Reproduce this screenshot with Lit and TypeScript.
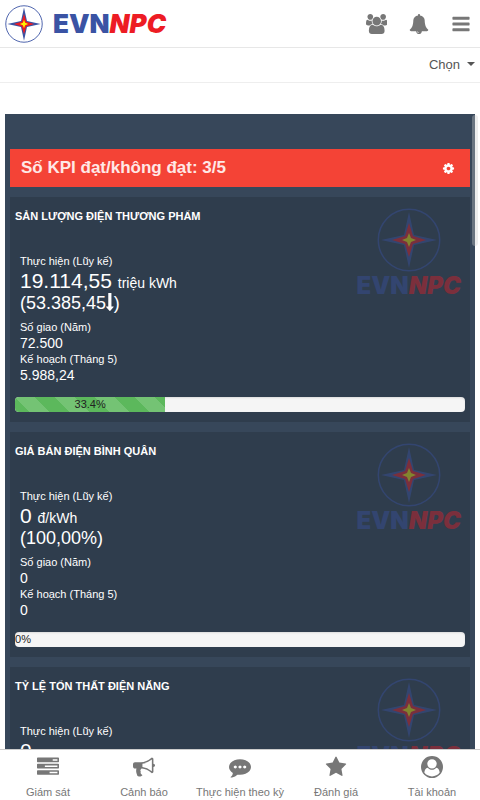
import { LitElement, html, css, svg, nothing } from "lit";
import { customElement, property } from "lit/decorators.js";

interface Kpi {
  title: string;
  value: string;
  unit: string;
  delta: string;
  down: boolean;
  year: string;
  plan: string;
  percent: number;
}

const KPIS: Kpi[] = [
  { title: "SẢN LƯỢNG ĐIỆN THƯƠNG PHẨM", value: "19.114,55", unit: "triệu kWh", delta: "53.385,45", down: true, year: "72.500", plan: "5.988,24", percent: 33.4 },
  { title: "GIÁ BÁN ĐIỆN BÌNH QUÂN", value: "0", unit: "đ/kWh", delta: "100,00%", down: false, year: "0", plan: "0", percent: 0 },
  { title: "TỶ LỆ TỔN THẤT ĐIỆN NĂNG", value: "0", unit: "", delta: "100,00%", down: false, year: "0", plan: "0", percent: 0 },
];

const ICONS: Record<string, { w: number; d: string }> = {
  users: { w: 1920, d: "M593 896q-162 5-265 128h-134q-82 0-138-40.5t-56-118.5q0-353 124-353 6 0 43.5 21t97.5 42.5 119 21.5q67 0 133-23-5 37-5 66 0 139 81 256zm1071 637q0 120-73 189.5t-194 69.5h-874q-121 0-194-69.5t-73-189.5q0-53 3.5-103.5t14-109 26.5-108.5 43-97.5 62-81 85.5-53.5 111.5-20q10 0 43 21.5t73 48 107 48 135 21.5 135-21.5 107-48 73-48 43-21.5q61 0 111.5 20t85.5 53.5 62 81 43 97.5 26.5 108.5 14 109 3.5 103.5zm-1024-1277q0 106-75 181t-181 75-181-75-75-181 75-181 181-75 181 75 75 181zm704 384q0 159-112.5 271.5t-271.5 112.5-271.5-112.5-112.5-271.5 112.5-271.5 271.5-112.5 271.5 112.5 112.5 271.5zm576 225q0 78-56 118.5t-138 40.5h-134q-103-123-265-128 81-117 81-256 0-29-5-66 66 23 133 23 59 0 119-21.5t97.5-42.5 43.5-21q124 0 124 353zm-128-609q0 106-75 181t-181 75-181-75-75-181 75-181 181-75 181 75 75 181z" },
  bell: { w: 1792, d: "M912 1696q0-16-16-16-59 0-101.5-42.5t-42.5-101.5q0-16-16-16t-16 16q0 73 51.5 124.5t124.5 51.5q16 0 16-16zm816-288q0 52-38 90t-90 38h-448q0 106-75 181t-181 75-181-75-75-181h-448q-52 0-90-38t-38-90q50-42 91-88t85-119.5 74.5-158.5 50-206 19.5-260q0-152 117-282.5t307-158.5q-8-19-8-39 0-40 28-68t68-28 68 28 28 68q0 20-8 39 190 28 307 158.5t117 282.5q0 139 19.5 260t50 206 74.5 158.5 85 119.5 91 88z" },
  bars: { w: 1792, d: "M1664 1344v128q0 26-19 45t-45 19h-1408q-26 0-45-19t-19-45v-128q0-26 19-45t45-19h1408q26 0 45 19t19 45zm0-512v128q0 26-19 45t-45 19h-1408q-26 0-45-19t-19-45v-128q0-26 19-45t45-19h1408q26 0 45 19t19 45zm0-512v128q0 26-19 45t-45 19h-1408q-26 0-45-19t-19-45v-128q0-26 19-45t45-19h1408q26 0 45 19t19 45z" },
  cog: { w: 1792, d: "M1152 896q0-106-75-181t-181-75-181 75-75 181 75 181 181 75 181-75 75-181zm512-109v222q0 12-8 23t-20 13l-185 28q-19 54-39 91 35 50 107 138 10 12 10 25t-9 23q-27 37-99 108t-94 71q-12 0-26-9l-138-108q-44 23-91 38-16 136-29 186-7 28-36 28h-222q-14 0-24.5-8.5t-11.5-21.5l-28-184q-49-16-90-37l-141 107q-10 9-25 9-14 0-25-11-126-114-165-168-7-10-7-23 0-12 8-23 15-21 51-66.5t54-70.5q-27-50-41-99l-183-27q-13-2-21-12.5t-8-23.5v-222q0-12 8-23t19-13l186-28q14-46 39-92-40-57-107-138-10-12-10-24 0-10 9-23 26-36 98.5-107.5t94.5-71.5q13 0 26 10l138 107q44-23 91-38 16-136 29-186 7-28 36-28h222q14 0 24.5 8.5t11.5 21.5l28 184q49 16 90 37l142-107q9-9 24-9 13 0 25 10 129 119 165 170 7 8 7 22 0 12-8 23-15 21-51 66.5t-54 70.5q26 50 41 98l183 28q13 2 21 12.5t8 23.5z" },
  tasks: { w: 1792, d: "M1024 1408h640v-128h-640v128zm-384-512h1024v-128h-1024v128zm640-512h384v-128h-384v128zm512 832v256q0 26-19 45t-45 19h-1664q-26 0-45-19t-19-45v-256q0-26 19-45t45-19h1664q26 0 45 19t19 45zm0-512v256q0 26-19 45t-45 19h-1664q-26 0-45-19t-19-45v-256q0-26 19-45t45-19h1664q26 0 45 19t19 45zm0-512v256q0 26-19 45t-45 19h-1664q-26 0-45-19t-19-45v-256q0-26 19-45t45-19h1664q26 0 45 19t19 45z" },
  bullhorn: { w: 1792, d: "M1664 640q53 0 90.5 37.5t37.5 90.5-37.5 90.5-90.5 37.5v384q0 52-38 90t-90 38q-417-347-812-380-58 19-91 66t-31 100.5 40 92.5q-20 33-23 65.5t6 58 33.5 55 48 50 61.5 50.5q-29 58-111.5 83t-168.5 11.5-132-55.5q-7-23-29.5-87.5t-32-94.5-23-89-15-101 3.5-98.5 22-110.5h-122q-66 0-113-47t-47-113v-192q0-66 47-113t113-47h480q435 0 896-384 52 0 90 38t38 90v384zm-128 604v-954q-394 302-768 343v270q377 42 768 341z" },
  comment: { w: 1792, d: "M640 896q0-53-37.5-90.5t-90.5-37.5-90.5 37.5-37.5 90.5 37.5 90.5 90.5 37.5 90.5-37.5 37.5-90.5zm384 0q0-53-37.5-90.5t-90.5-37.5-90.5 37.5-37.5 90.5 37.5 90.5 90.5 37.5 90.5-37.5 37.5-90.5zm384 0q0-53-37.5-90.5t-90.5-37.5-90.5 37.5-37.5 90.5 37.5 90.5 90.5 37.5 90.5-37.5 37.5-90.5zm384 0q0 174-120 321.5t-326 233-450 85.5q-110 0-211-18-173 173-435 229-52 10-86 13-12 1-22-6t-13-18q-4-15 20-37 5-5 23.5-21.5t25.5-23.5 23.5-25.5 24-31.5 20.5-37 20-48 14.5-57.5 12.5-72.5q-146-90-229.5-216.5t-83.5-269.5q0-174 120-321.5t326-233 450-85.5 450 85.5 326 233 120 321.5z" },
  star: { w: 1792, d: "M1728 647q0 22-26 48l-363 354 86 500q1 7 1 20 0 21-10.5 35.5t-30.5 14.5q-19 0-40-12l-449-236-449 236q-22 12-40 12-21 0-31.5-14.5t-10.5-35.5q0-6 2-20l86-500-364-354q-25-27-25-48 0-37 56-46l502-73 225-455q19-41 49-41t49 41l225 455 502 73q56 9 56 46z" },
  user: { w: 1792, d: "M1523 1339q-22-155-87.5-257.5t-184.5-118.5q-67 74-159.5 115.5t-195.5 41.5-195.5-41.5-159.5-115.5q-119 16-184.5 118.5t-87.5 257.5q106 150 271 237.5t356 87.5 356-87.5 271-237.5zm-243-699q0-159-112.5-271.5t-271.5-112.5-271.5 112.5-112.5 271.5 112.5 271.5 271.5 112.5 271.5-112.5 112.5-271.5zm512 256q0 182-71 347.5t-190.5 286-285.5 191.5-349 71q-182 0-348-71t-286-191-191-286-71-348 71-348 191-286 286-191 348-71 348 71 286 191 191 286 71 348z" },
  down: { w: 768, d: "M765 1363q8 19-5 35l-350 384q-10 10-23 10-14 0-24-10l-355-384q-13-16-5-35 9-19 29-19h194v-1312q0-14 9-23t23-9h252q14 0 23 9t9 23v1312h194q21 0 29 19z" },
};

const icon = (name: string) => html`<svg class="icon ${name}" viewBox="0 0 ${ICONS[name].w} 1792" aria-hidden="true">
  ${svg`<path d=${ICONS[name].d}></path>`}
</svg>`;

@customElement("evn-logo")
export class EvnLogo extends LitElement {
  static styles = css`
    :host {
      display: flex;
      align-items: center;
      gap: 10px;
      font: italic 900 26px/28px Inter, "Liberation Sans", sans-serif;
    }
    :host([stacked]) {
      flex-direction: column;
      gap: 0;
      font-size: 24px;
      opacity: 0.4;
    }
    .star { display: block; width: 38px; height: 38px; }
    :host([stacked]) .star { width: 64px; height: 64px; }
    .word { white-space: nowrap; color: #ed1c24; }
    .evn { font-style: normal; color: #3a53a4; }
  `;

  render() {
    return html`
      <svg class="star" viewBox="0 0 64 64" aria-hidden="true">
        <circle cx="32" cy="32" r="30.7" fill="none" stroke="#3a53a4" stroke-width="1.5"></circle>
        <path fill="#3a53a4" d="M32 4l5 23L60 32l-23 5L32 60l-5-23L4 32l23-5z"></path>
        <path fill="#ed1c24" d="M32 15l4 13L49 32l-13 4L32 49l-4-13L15 32l13-4z"></path>
        <path fill="#fff200" d="M32 25l2 5L39 32l-5 2L32 39l-2-5L25 32l5-2z"></path>
      </svg>
      <span class="word"><span class="evn">EVN</span>NPC</span>
    `;
  }
}

@customElement("kpi-card")
export class KpiCard extends LitElement {
  @property({ attribute: false }) kpi!: Kpi;

  static styles = css`
    :host {
      display: block;
      position: relative;
      padding: 10px 5px;
      background: #2f3d4d;
      color: #fff;
    }
    .title { margin: 0 0 28px; font-size: 11px; line-height: 18px; font-weight: bold; }
    .mark { position: absolute; top: 11px; right: 9px; }
    .stats { margin: 0 5px 14px; font-size: 11px; line-height: 16px; }
    .stats dd { margin: 0; font-size: 14px; }
    .stats .actual { margin-bottom: 6px; line-height: 20px; }
    .value { margin-right: 2px; font-size: 21px; line-height: 24px; }
    .delta { display: block; font-size: 18px; }
    .icon { height: 18px; vertical-align: -2px; fill: currentColor; }
    .track {
      height: 15px;
      overflow: hidden;
      border-radius: 4px;
      background: #f5f5f5;
      box-shadow: inset 0 1px 2px rgba(0, 0, 0, 0.1);
      color: #222;
      font-size: 11px;
      line-height: 15px;
      text-align: center;
    }
    .fill {
      width: fit-content;
      height: 15px;
      background: #5cb85c linear-gradient(45deg, rgba(255, 255, 255, 0.15) 25%, transparent 25%, transparent 50%, rgba(255, 255, 255, 0.15) 50%, rgba(255, 255, 255, 0.15) 75%, transparent 75%) 0 0 / 40px 40px;
    }
  `;

  render() {
    const k = this.kpi;
    return html`
      <h2 class="title">${k.title}</h2>
      <evn-logo class="mark" stacked></evn-logo>
      <dl class="stats">
        <dt>Thực hiện (Lũy kế)</dt>
        <dd class="actual">
          <span class="value">${k.value}</span> ${k.unit}
          <span class="delta">(${k.delta}${k.down ? icon("down") : nothing})</span>
        </dd>
        <dt>Số giao (Năm)</dt>
        <dd>${k.year}</dd>
        <dt>Kế hoạch (Tháng 5)</dt>
        <dd>${k.plan}</dd>
      </dl>
      <div class="track" role="progressbar" aria-label=${k.title} aria-valuenow=${k.percent} aria-valuemin="0" aria-valuemax="100">
        <div class="fill" style=${k.percent ? `width:${k.percent}%` : "background:none"}>${k.percent}%</div>
      </div>
    `;
  }
}

@customElement("app-root")
export class AppRoot extends LitElement {
  static styles = css`
    :host {
      display: flex;
      flex-direction: column;
      height: 100vh;
      background: #fff;
      color: #555;
      font-family: "Liberation Sans", Arial, sans-serif;
    }
    button, .tab { color: #777; }
    button { padding: 0; border: 0; background: none; font: inherit; cursor: pointer; }
    .icon { display: block; fill: currentColor; }
    .header {
      display: flex;
      align-items: center;
      justify-content: space-between;
      height: 47px;
      padding: 0 9px 0 5px;
      border-bottom: 1px solid #e7e7e7;
    }
    .actions { display: flex; align-items: center; gap: 22px; }
    .actions .icon { height: 20px; }
    .filter {
      display: flex;
      justify-content: flex-end;
      height: 32px;
      padding: 0 5px 2px;
      border-bottom: 1px solid #eee;
    }
    .choose { display: flex; align-items: center; gap: 7px; color: #555; font-size: 13px; }
    .caret { border: 4px solid transparent; border-top-color: currentColor; border-bottom: 0; }
    .content { position: relative; flex: 1; min-height: 0; margin-top: 31px; }
    .scroller { height: 100%; padding: 0 5px; box-sizing: border-box; overflow-y: auto; scrollbar-width: none; }
    .thumb {
      position: absolute;
      top: 1px;
      right: 2px;
      width: 6px;
      height: 131px;
      border-radius: 3px;
      background: rgba(204, 204, 204, 0.35);
    }
    .panel { display: flex; flex-direction: column; gap: 10px; padding: 35px 5px 10px; background: #37475a; }
    .summary {
      display: flex;
      align-items: center;
      justify-content: space-between;
      padding: 8px 15px 8px 11px;
      background: #f44336;
      color: #fff;
    }
    .summary h1 { margin: 0; color: #ffe8e6; font-size: 17px; line-height: 22px; }
    .summary button { color: #fff; }
    .summary .icon { height: 13px; }
    .tabs { display: flex; height: 50px; border-top: 1px solid #ccc; background: #fff; }
    .tab {
      display: flex;
      flex: 1 1 0;
      flex-direction: column;
      align-items: center;
      gap: 7px;
      padding-top: 6px;
      font-size: 11px;
      line-height: 14px;
      text-decoration: none;
      white-space: nowrap;
    }
    .tab .icon { height: 22px; }
  `;

  render() {
    const tabs = [
      ["tasks", "Giám sát"],
      ["bullhorn", "Cảnh báo"],
      ["comment", "Thực hiện theo kỳ"],
      ["star", "Đánh giá"],
      ["user", "Tài khoản"],
    ];
    return html`
      <header class="header">
        <evn-logo></evn-logo>
        <div class="actions">
          <button aria-label="Nhóm">${icon("users")}</button>
          <button aria-label="Thông báo">${icon("bell")}</button>
          <button aria-label="Menu">${icon("bars")}</button>
        </div>
      </header>
      <div class="filter">
        <button class="choose" aria-haspopup="listbox">Chọn <span class="caret"></span></button>
      </div>
      <main class="content">
        <div class="scroller">
          <div class="panel">
            <div class="summary">
              <h1>Số KPI đạt/không đạt: 3/5</h1>
              <button aria-label="Cài đặt">${icon("cog")}</button>
            </div>
            ${KPIS.map((k) => html`<kpi-card .kpi=${k}></kpi-card>`)}
          </div>
        </div>
        <div class="thumb"></div>
      </main>
      <nav class="tabs">
        ${tabs.map(([name, label]) => html`<a class="tab" href="#${name}">${icon(name)}${label}</a>`)}
      </nav>
    `;
  }
}
